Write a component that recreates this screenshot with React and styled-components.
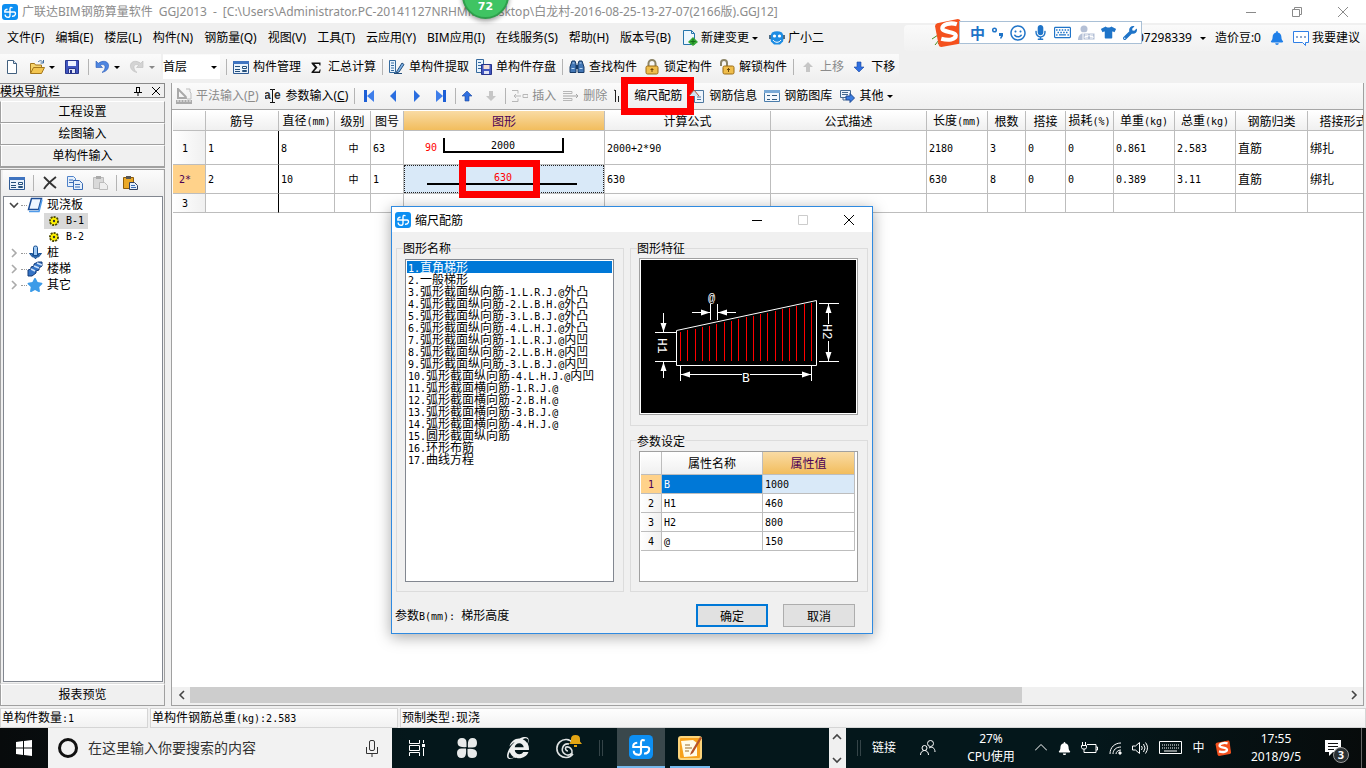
import React, {useState} from 'react';
import styled, {createGlobalStyle, css} from 'styled-components';
import {FaTshirt, FaWrench, FaMicrophone, FaRegKeyboard, FaRegSmile, FaInternetExplorer, FaBell, FaStar} from 'react-icons/fa';

const columns = [
    {key: 'name', label: '筋号', width: 73},
    {key: 'diameter', label: '直径(mm)', width: 56},
    {key: 'grade', label: '级别', width: 36, center: true},
    {key: 'shapeNo', label: '图号', width: 33},
    {key: 'shape', label: '图形', width: 201, active: true},
    {key: 'formula', label: '计算公式', width: 166},
    {key: 'note', label: '公式描述', width: 156},
    {key: 'length', label: '长度(mm)', width: 61},
    {key: 'count', label: '根数', width: 38},
    {key: 'lap', label: '搭接', width: 40},
    {key: 'loss', label: '损耗(%)', width: 48},
    {key: 'unit', label: '单重(kg)', width: 61},
    {key: 'total', label: '总重(kg)', width: 61},
    {key: 'kind', label: '钢筋归类', width: 72},
    {key: 'lapType', label: '搭接形式', width: 72},
];

const bars = [
    {id: '1', height: 34, name: '1', diameter: '8', grade: '中', shapeNo: '63', shape: 'hook', formula: '2000+2*90', length: '2180', count: '3', lap: '0', loss: '0', unit: '0.861', total: '2.583', kind: '直筋', lapType: '绑扎'},
    {id: '2*', height: 29, active: true, name: '2', diameter: '10', grade: '中', shapeNo: '1', shape: 'line', formula: '630', length: '630', count: '8', lap: '0', loss: '0', unit: '0.389', total: '3.11', kind: '直筋', lapType: '绑扎'},
    {id: '3', height: 19},
];

const shapes = [
    '1.直角梯形', '2.一般梯形',
    '3.弧形截面纵向筋-1.L.R.J.@外凸', '4.弧形截面纵向筋-2.L.B.H.@外凸',
    '5.弧形截面纵向筋-3.L.B.J.@外凸', '6.弧形截面纵向筋-4.L.H.J.@外凸',
    '7.弧形截面纵向筋-1.L.R.J.@内凹', '8.弧形截面纵向筋-2.L.B.H.@内凹',
    '9.弧形截面纵向筋-3.L.B.J.@内凹', '10.弧形截面纵向筋-4.L.H.J.@内凹',
    '11.弧形截面横向筋-1.R.J.@', '12.弧形截面横向筋-2.B.H.@',
    '13.弧形截面横向筋-3.B.J.@', '14.弧形截面横向筋-4.H.J.@',
    '15.圆形截面纵向筋', '16.环形布筋', '17.曲线方程',
];

const params = [['B', '1000'], ['H1', '460'], ['H2', '800'], ['@', '150']];

const menus = ['文件(F)', '编辑(E)', '楼层(L)', '构件(N)', '钢筋量(Q)', '视图(V)', '工具(T)', '云应用(Y)', 'BIM应用(I)', '在线服务(S)', '帮助(H)', '版本号(B)'];

const Global = createGlobalStyle`
* { box-sizing: border-box; }
body {
    margin: 0;
    background: #f0f0f0;
    color: #000;
    font: 12px/16px "Noto Sans", "Noto Sans CJK SC", sans-serif;
    overflow: hidden;
}
button, input, select {
    font: inherit;
    color: inherit;
    margin: 0;
    padding: 0;
    border: 0;
    background: none;
    border-radius: 0;
}
ul { list-style: none; margin: 0; padding: 0; }
svg { display: block; flex: none; }
`;

// Half-width characters take half of a 12px ideograph
const Narrow = styled.span`
font-family: "DejaVu Sans Mono", monospace;
font-size: 10px;
`;

const Grid = ({children}) => String(children).split(/([\x20-\x7e]+)/).filter(Boolean).map((part, i) => (
    /^[\x20-\x7e]/.test(part) ? <Narrow key={i}>{part}</Narrow> : part
));

const icons = {
    logo: <><rect width="16" height="16" rx="3" fill="#0d8ff2"/><path d="M10.500 3.800Q8.200 2.500 8 5v6q0 2.500-1.800 2.200Q3 13 3.200 10.500M5.500 5.200Q2.500 5.500 2.800 8H12q2 .2 1.300 2.500-.8 2-3.300 1.800" stroke="#fff" strokeWidth="1.400" fill="none"/></>,
    doc: <><path d="M3.500 1.500h6l3 3v10h-9z" fill="#fff" stroke="#42607f"/><path d="M9.500 1.500v3h3" fill="#d5e4f4" stroke="#42607f"/></>,
    folder: <><path d="M1.500 14V4.500h4l1 1.500h6v3" fill="#f6d36b" stroke="#a5771b"/><path d="M1.500 14.500l3-6h11l-3 6z" fill="#f3c54f" stroke="#a5771b"/><path d="M9 3c2-2 4-1.500 5 .5M14.500 1v3h-3" fill="none" stroke="#3f6c9e"/></>,
    save: <><path d="M1.500 1.500h13v13h-13z" fill="#4156c0" stroke="#27348b"/><path d="M4 2h8v5H4z" fill="#eef2ff"/><path d="M4.500 9.500h7v5h-7z" fill="#dfe3f5" stroke="#27348b"/><path d="M6 11h2v3H6z" fill="#27348b"/></>,
    undo: <path d="M2 2v6.500h6.500L6.300 6.300C9.500 4.500 11.500 6.500 11 9c-.4 1.800-1.500 3.300-3 4.500 4.500-1 7-4 6.500-7.500C14 2 8.500 1 4.300 4.300z" fill="#4f86e0" stroke="#2a5bb8" strokeWidth=".6"/>,
    redo: <path d="M14 2v6.500H7.500l2.200-2.200C6.500 4.500 4.500 6.500 5 9c.4 1.800 1.500 3.300 3 4.500-4.500-1-7-4-6.500-7.500C2 2 7.500 1 11.700 4.300z" fill="#d4d4d4" stroke="#bdbdbd" strokeWidth=".6"/>,
    form: <><path d="M.5 2.500h15v12H.500z" fill="#eaf3fc" stroke="#2f5a93"/><path d="M0 2h16v3H0z" fill="#3f74c0"/><path d="M2 7.500h5M2 10.500h5M2 12.500h5" stroke="#24507c" fill="none"/><path d="M9.500 7.500h4v2h-4zM9.500 11.500h4v1h-4z" stroke="#24507c" fill="#fff"/></>,
    sum: <path d="M3.500 3.500h9v3h-1L11 5H6.500l3 3.500-3.500 4h5l.7-2h1L12 14H3.500v-1L7 8.800 3.500 4.500z" fill="#111"/>,
    extract: <><path d="M.5 1.500h6v12h-6z" fill="#e7f2fd" stroke="#356a9e"/><path d="M2 4h3M2 6.500h3M2 9h3M2 11.500h3" stroke="#356a9e"/><path d="M8 12L13 4l2 1.500L10 13l-3 1z" fill="#7fb2e8" stroke="#234d7a"/><path d="M5 14.500h8" stroke="#234d7a"/></>,
    store: <><path d="M.5.5h7v13h-7z" fill="#e7f2fd" stroke="#356a9e"/><path d="M2 3.500h3M2 6.500h3M2 9.500h3" stroke="#356a9e"/><path d="M5.500 5.500h10v10h-10z" fill="#4156c0" stroke="#27348b"/><path d="M7.500 6h6v4h-6z" fill="#f4dfd8"/><path d="M8 12h5v3H8z" fill="#dfe3f5"/></>,
    find: <><path d="M3 2h3l1 3v8.500H1V8zM10 2h3l2 6v5.500H9V5z" fill="#4276b5" stroke="#173a66"/><path d="M7 6h2v4H7z" fill="#173a66"/><path d="M2.500 9.500h3M10.500 9.500h3M3.500 4h2M10.500 4h2" stroke="#bcd8f4"/></>,
    lock: <><path d="M4.500 8V4.500a3.500 3.500 0 0 1 7 0V8" fill="none" stroke="#8c8466" strokeWidth="2"/><rect x="2" y="7" width="12" height="8" rx="1.500" fill="#efbd4b" stroke="#9c6c14"/><path d="M8 9v4M6.500 10.500h3" stroke="#6c4708"/></>,
    unlock: <><path d="M2 7V4a3 3 0 0 1 6 0v3" fill="none" stroke="#8c8466" strokeWidth="2"/><rect x="4" y="7" width="11" height="8" rx="1.500" fill="#efbd4b" stroke="#9c6c14"/><path d="M9.500 9v4M8 10.500h3" stroke="#6c4708"/></>,
    up: <path d="M8 3l5 5h-3v5H6V8H3z" fill="#2f6fe0" stroke="#1b489f" strokeWidth=".6"/>,
    upOff: <path d="M8 3l5 5h-3v5H6V8H3z" fill="#c6c6c6"/>,
    down: <path d="M8 13l5-5h-3V3H6v5H3z" fill="#2f6fe0" stroke="#1b489f" strokeWidth=".6"/>,
    downOff: <path d="M8 13l5-5h-3V3H6v5H3z" fill="#c6c6c6"/>,
    first: <><path d="M3 2h3v12H3z" fill="#1d5fd6"/><path d="M13 2v12L6 8z" fill="#3f7eea"/></>,
    prev: <path d="M11 2v12L5 8z" fill="#2b6ee0"/>,
    next: <path d="M5 2v12l6-6z" fill="#2b6ee0"/>,
    last: <><path d="M10 2h3v12h-3z" fill="#1d5fd6"/><path d="M3 2v12l7-6z" fill="#3f7eea"/></>,
    ruler: <><path d="M2 1v9h9z" fill="none" stroke="#a9a9a9" strokeWidth="2"/><path d="M10 1h4v3l1 1v6h-4" fill="#f4f4f4" stroke="#bdbdbd"/><path d="M0 12h16v4H0z" fill="#aaa"/><path d="M2 12v2M5 12v2M8 12v2M11 12v2M14 12v2" stroke="#eee"/></>,
    insert: <><path d="M0 2.500h6v3M0 13.500h6v-3" fill="none" stroke="#b7b7b7"/><path d="M2 8h7M4 6L2 8l2 2M11 6.500h5v3h-5z" fill="none" stroke="#b7b7b7"/></>,
    remove: <><path d="M0 3.500h9v2H0M0 12.500h9v-2H0" fill="none" stroke="#b7b7b7"/><path d="M0 8h15M13 6l2 2-2 2" fill="none" stroke="#a5a5a5"/></>,
    scale: <path d="M1.500 2v12M4.500 8v6M7.500 6v8M10.500 4v10M0 2l2 1" stroke="#222" fill="none"/>,
    info: <><path d="M5.500 2.500h9v12h-9z" fill="#edf4fc" stroke="#4d779e"/><path d="M0 8l5-6 5 6" fill="#cfe1f3" stroke="#b44c37"/><path d="M8 9h4M8 11.500h4" stroke="#4d779e"/></>,
    library: <><path d="M.5 2.500h15v11H.500z" fill="#f3f8fd" stroke="#4b7dab"/><path d="M0 2h16v3H0z" fill="#79a9d6"/><path d="M3 7.500h3M3 11.500h3M8 7.500h5M8 11.500h5" stroke="#30597f"/></>,
    other: <><path d="M1.500 2.500h10v7h-10z" fill="#edf4fc" stroke="#44698f"/><path d="M3 4.500h6M3 6.500h6M4 9v3h3" stroke="#44698f" fill="none"/><path d="M7 8h4V5.500l4.500 4.500-4.500 4.500V12H7z" fill="#3c7de0" stroke="#1e4b94"/></>,
    change: <><path d="M1.500.5h8l3 3v11h-11z" fill="#eef7fd" stroke="#2675ab"/><path d="M9.500.5v3h3" fill="none" stroke="#2675ab"/><path d="M11 7l5 5-5 4-5-4z" fill="#35a834"/><path d="M11 9v5M8.500 11.500h5" stroke="#126b17"/></>,
    helper: <><path d="M3 2.500Q8 0 13 2.500l2 4-1 5-3 3H5l-3-3-1-5z" fill="#1d8ce3"/><circle cx="5.500" cy="6" r="1.600" fill="#fff"/><circle cx="10.500" cy="6" r="1.600" fill="#fff"/><path d="M4 10c2 3 6 3 8 0" stroke="#fff" fill="none"/><path d="M0 5h2v4H0zM14 5h2v4h-2z" fill="#4e6c86"/></>,
    chat: <><path d="M.5 1.500h15v11h-3v3l-3-3h-9z" fill="#fff" stroke="#2f7fe6"/><path d="M3 7h2M7 7h2M11 7h2" stroke="#1a4f9c"/></>,
    cross: <path d="M2 2c4 4 8 8 12 11M14 2C9 6 5 9 2 14" stroke="#333" strokeWidth="1.800" fill="none"/>,
    copy: <><path d="M.5 1.500h6l2 2v8h-8z" fill="#e6f0fb" stroke="#4f82c9"/><path d="M6.500 5.500h6l3 3v6h-9z" fill="#e6f0fb" stroke="#3a6cb5"/><path d="M2 5h4M2 7.500h4M8 9.500h5M8 12h5" stroke="#3a6cb5"/></>,
    pasteOff: <><path d="M1.500 2.500h10v11h-10z" fill="#d9d9d9" stroke="#bcbcbc"/><path d="M4 1h5v3H4z" fill="#aaa"/><path d="M7.500 7.500h5l3 3v4h-8z" fill="#eee" stroke="#bcbcbc"/></>,
    paste: <><path d="M1.500 2.500h10v11h-10z" fill="#eaa929" stroke="#8d5d0b"/><path d="M4 1h5v3H4z" fill="#555"/><path d="M7.500 7.500h5l3 3v4h-8z" fill="#e6f0fb" stroke="#33415f"/><path d="M9 10.500h4M9 12.500h5" stroke="#3a6cb5"/></>,
    slab: <><path d="M4.500 1.500h10l-3 11h-10z" fill="#eef6ff" stroke="#1c4d96" strokeWidth="1.500"/><path d="M2 14.500h10l3-12" fill="none" stroke="#4f9bea" strokeWidth="1.500"/></>,
    gear: <><circle cx="8" cy="8" r="4" fill="#fff200" stroke="#4d4a00" strokeDasharray="2 1" strokeWidth="2"/><circle cx="8" cy="8" r="3" fill="#fff200"/><circle cx="8" cy="8" r="1.200" fill="#333"/></>,
    pile: <><path d="M6.500 2.500a2 1.500 0 0 1 4 0V10l-2 4-2-4z" fill="#9dc8f3" stroke="#174f91"/><path d="M2.500 8.500h3v2h6v-2h3l-3 3.500h-6z" fill="#3c7fc9" stroke="#174f91"/></>,
    stairs: <><path d="M1 15V9l3-1V6l3-1V3l4-2h4v4l-3 2v2l-3 1v2l-4 3z" fill="#3473c5" stroke="#123a79"/><path d="M4 8l4 2M7 5l5 2M10 2l5 2" stroke="#cde2fb" strokeWidth="1.500"/></>,
    rebar: <path d="M3 15l4-5M6 14l5-6M0 9l9-6" stroke="#4a8a1d" fill="none"/>,
};

const Icon = ({name, size = 16}) => (
    <svg width={size} height={size} viewBox="0 0 16 16" aria-hidden="true">{icons[name]}</svg>
);

const TextIcon = () => (
    <svg width="16" height="16" viewBox="0 0 16 16" aria-hidden="true">
        <text x="-1" y="11" fontSize="12" fontFamily="Liberation Sans" fontWeight="bold" fill="#333">a</text>
        <text x="9" y="11" fontSize="12" fontFamily="Liberation Sans" fontWeight="bold" fill="#333">e</text>
        <path d="M5 1.500h2.500v13M10 1.500H7.500M5 14.500h5" stroke="#111" fill="none"/>
    </svg>
);

const Chevron = ({dir = 'down', color = '#444', size = 10}) => {
    const turn = {down: 0, left: 90, up: 180, right: 270}[dir];
    return (
        <svg width={size} height={size} viewBox="0 0 10 10" aria-hidden="true">
            <path d="M1 3l4 4 4-4" transform={`rotate(${turn} 5 5)`} fill="none" stroke={color} strokeWidth="1.600"/>
        </svg>
    );
};

const SogouS = ({size}) => (
    <svg width={size} height={size} viewBox="0 0 28 28" aria-hidden="true">
        <path d="M3 5L23 1q2 0 2.500 2L28 22q0 2-2 2.500L7 28q-2 0-2.500-2L1 8q0-2 2-3z" fill="#f4511e"/>
        <path d="M22 6c-6-2-14 0-14 4s13 3 13 7-7 5-14 3" fill="none" stroke="#fff" strokeWidth="4"/>
    </svg>
);

const BendShape = () => (
    <svg width="200" height="33" viewBox="0 0 200 33">
        <path d="M40 7v14h119V7" fill="none" stroke="#000" strokeWidth="2"/>
        <text x="21" y="20" fontSize="10" fontFamily="DejaVu Sans Mono" fill="#f00">90</text>
        <text x="99" y="18" fontSize="10" fontFamily="DejaVu Sans Mono" textAnchor="middle">2000</text>
    </svg>
);

const LineShape = () => (
    <svg width="198" height="26" viewBox="0 0 198 26">
        <path d="M22 18h150" stroke="#000" strokeWidth="2"/>
        <text x="98" y="15" fontSize="10" fontFamily="DejaVu Sans Mono" textAnchor="middle" fill="#f00">630</text>
    </svg>
);

const Diagram = () => {
    const lines = [];
    for(let i = 0; i < 19; i++){
        const x = Math.round(40 + i * 7.280) + .5;
        lines.push(<path key={i} d={`M${x} ${Math.round(73 - i * 1.620)}V102`} stroke="#f00"/>);
    }
    return (
        <svg width="100%" height="155" role="img" aria-label="直角梯形">
            {lines}
            <g fill="none" stroke="#fff">
                <path d="M36.500 71.500L176.500 41.500V106.500H36.500z"/>
                <path d="M40.500 107v15M171.500 107v15M41 115.500h61M110 115.500h61"/>
                <path d="M15 73.500h21M15 102.500h21M23.500 54v19M23.500 103v16"/>
                <path d="M179 44.500h20M179 102.500h20M188.500 45v20M188.500 82v20"/>
                <path d="M70.500 45v16M77.500 45v16M52 53.500h18M78 53.500h18"/>
            </g>
            <path d="M41 115.500l9-3v6zM171 115.500l-9-3v6zM23.500 73l-3-9h6zM23.500 103l-3 9h6zM188.500 45l-3 9h6zM188.500 102l-3-9h6zM70 53.500l-9-3v6zM78 53.500l9-3v6z" fill="#fff"/>
            <g fill="#fff" fontFamily="Liberation Mono" fontSize="13">
                <text x="102" y="123">B</text>
                <text x="68" y="43" fontSize="12">@</text>
                <text transform="translate(18 79) rotate(90)">H1</text>
                <text transform="translate(183 65) rotate(90)">H2</text>
            </g>
        </svg>
    );
};

const Page = styled.div`
position: relative;
display: flex;
flex-direction: column;
height: 100vh;
overflow: hidden;
`;

const TitleBar = styled.header`
display: flex;
align-items: center;
gap: 4px;
height: 23px;
padding: 0 17px 0 2px;
background: #fff;
color: #8c8c8c;
`;

const TitleText = styled.div`
display: flex;
flex: 1;
gap: 6px;
white-space: nowrap;
`;

const CaptionButtons = styled.div`
display: flex;
gap: ${props => props.gap}px;
color: ${props => props.color || '#8a8a8a'};
button {
    display: flex;
    padding: 0;
}
`;

const Ball = styled.div`
position: absolute;
z-index: 3;
left: 462px;
top: -28px;
width: 47px;
height: 47px;
padding-top: 25px;
border: 2px solid #2f9e4c;
border-radius: 50%;
background: #3fc463;
box-shadow: 0 2px 5px rgba(0,0,0,.4);
color: #fff;
font: bold 11px/16px "DejaVu Sans", sans-serif;
text-align: center;
`;

const MenuBar = styled.nav`
display: flex;
align-items: center;
justify-content: space-between;
height: 30px;
padding-left: 7px;
white-space: nowrap;
`;

const MenuGroup = styled.div`
display: flex;
align-items: center;
gap: 11px;
`;

const MenuButton = styled.button`
display: flex;
align-items: center;
gap: ${props => props.gap || 3}px;
white-space: nowrap;
`;

const Account = styled.div`
display: flex;
align-items: center;
justify-content: flex-end;
gap: 9px;
width: 462px;
height: 26px;
padding: 0 6px 0 28px;
border-radius: 4px 0 0 4px;
background: linear-gradient(#fafafa, #f1f1f1);
> svg:first-child { margin-right: auto; }
`;

const Arrow = styled.i`
width: 0;
border: 3px solid transparent;
border-top-color: ${props => props.off ? '#888' : '#000'};
border-bottom-width: 0;
`;

const Sogou = styled.div`
position: absolute;
z-index: 2;
left: 934px;
top: 18px;
display: flex;
align-items: center;
color: #1f74c8;
`;

const SogouKeys = styled.div`
display: flex;
align-items: center;
justify-content: space-between;
width: 183px;
height: 23px;
margin-left: -4px;
padding: 0 4px 0 10px;
border: 1px solid #a9c0d6;
background: #fff;
font-weight: bold;
font-size: 15px;
`;

const ToolRow = styled.div`
display: flex;
align-items: center;
gap: 2px;
height: 28px;
`;

const ToolGroup = styled.div`
display: flex;
align-items: center;
gap: 7px;
height: 26px;
padding-right: 4px;
background: linear-gradient(#fbfbfb, #efefef);
white-space: nowrap;
`;

const ToolButton = styled.button`
position: relative;
display: flex;
align-items: center;
gap: 4px;
color: ${props => props.off ? '#8b8b8b' : '#000'};
`;

const Sep = styled.i`
width: 1px;
height: 16px;
margin: 0 ${props => props.tight ? -4 : -1}px 0 -1px;
background: #b4b4b4;
`;

const FileTools = styled(ToolGroup)`
width: 161px;
gap: 9px;
padding-left: 4px;
`;

const FloorField = styled.label`
display: flex;
align-items: center;
height: 24px;
padding-right: 3px;
background: #fff;
`;

const FloorSelect = styled.select`
width: 48px;
height: 22px;
appearance: none;
background: #fff;
`;

const Workspace = styled.main`
display: flex;
gap: 6px;
flex: 1;
min-height: 0;
padding: 2px 2px 2px 0;
`;

const Sidebar = styled.aside`
display: flex;
flex-direction: column;
flex: none;
width: 165px;
`;

const PanelTitle = styled.div`
display: flex;
align-items: center;
justify-content: space-between;
height: 15px;
padding-right: 3px;
border: 1px solid #8a8a8a;
border-left: 0;
font-family: "Noto Sans CJK SC", sans-serif;
svg { margin-left: 8px; }
div { display: flex; }
`;

const ModuleButton = styled.button`
height: 22px;
border: 1px solid #a0a0a0;
border-top-color: #fff;
box-shadow: inset 1px 0 #fff;
`;

const Modules = styled.div`
display: flex;
flex-direction: column;
padding-top: 3px;
border-bottom: 1px solid #a0a0a0;
`;

const TreePanel = styled.section`
display: flex;
flex-direction: column;
flex: 1;
margin-top: 1px;
padding: 0 1px 1px 2px;
border: 1px solid #a0a0a0;
border-bottom-color: #dcdcdc;
`;

const TreeTools = styled.div`
display: flex;
align-items: center;
gap: 9px;
height: 26px;
padding-left: 6px;
background: linear-gradient(#fcfcfc, #ededed);
`;

const Tree = styled.ul`
flex: 1;
padding-left: 5px;
border: 1px solid #828790;
background: #fff;
`;

const TreeItem = styled.li`
display: flex;
align-items: center;
height: 16px;
padding-left: ${props => props.child ? 35 : 0}px;
> span:last-child {
    display: flex;
    align-items: center;
    gap: 4px;
    height: 16px;
    padding: 0 4px 0 ${props => props.child ? 2 : 0}px;
    background: ${props => props.selected ? '#d9d9d9' : 'none'};
}
`;

const Branch = styled.span`
width: 6px;
margin-left: 2px;
border-top: 1px dotted #999;
`;

const Editor = styled.section`
display: flex;
flex-direction: column;
flex: 1;
min-width: 0;
border: 1px solid #a0a0a0;
border-top: 0;
`;

const EditorTools = styled(ToolGroup)`
height: 27px;
flex: none;
padding-left: 4px;
border-bottom: 1px solid #a6a6a6;
`;

const NavButtons = styled.div`
display: flex;
gap: 8px;
`;

const RedMark = styled.span`
position: absolute;
inset: -11px -12px -11px 7px;
border: 7px solid #f00;
`;

const Sheet = styled.div`
flex: 1;
min-height: 0;
overflow: hidden;
padding: 1px 0 0 1px;
background: #fff;
`;

const cellFont = css`
font-family: "Noto Sans CJK SC", sans-serif;
font-size: 12px;
line-height: 16px;
`;

const Table = styled.table`
${cellFont}
width: 100%;
table-layout: fixed;
border-collapse: separate;
border-spacing: 0;
`;

const Th = styled.th`
height: 20px;
padding: 0;
border-right: 1px solid #bdbdbd;
border-bottom: 1px solid #bdbdbd;
background: ${props => props.active ? 'linear-gradient(#f9dba4, #f2bd5d)' : 'linear-gradient(#fff, #f0f0f0)'};
color: ${props => props.active ? '#4b0055' : '#000'};
font-weight: normal;
white-space: nowrap;
overflow: hidden;
`;

const RowHead = styled.th`
padding: 0 8px 0 0;
border-right: 1px solid #bdbdbd;
border-bottom: 1px solid #bdbdbd;
background: ${props => props.active ? '#ffd28a' : 'linear-gradient(90deg, #fff, #f0f0f0)'};
color: ${props => props.active ? '#4b0055' : '#000'};
font-weight: normal;
`;

const Td = styled.td`
position: relative;
padding: 0 0 0 ${props => props.flush ? 0 : 2}px;
border-right: 1px solid ${props => props.dark ? '#000' : '#bdbdbd'};
border-bottom: 1px solid #bdbdbd;
font-size: ${props => props.center ? 10 : 12}px;
text-align: ${props => props.center ? 'center' : 'left'};
white-space: nowrap;
`;

const FocusCell = styled.div`
height: 28px;
border: 1px dotted #222;
background: #d9e9f8;
`;

const CellMark = styled.span`
position: absolute;
left: 55px;
top: -5px;
width: 81px;
height: 38px;
border: 7px solid #f00;
`;

const Scroll = styled.div`
display: flex;
align-items: center;
flex: none;
height: 16px;
margin: 0 1px 2px;
background: #f0f0f0;
button { display: flex; justify-content: center; width: 17px; }
`;

const ScrollTrack = styled.div`
flex: 1;
height: 16px;
&::before {
    content: "";
    display: block;
    width: 72%;
    height: 100%;
    background: #cdcdcd;
}
`;

const StatusBar = styled.footer`
display: flex;
gap: 2px;
height: 20px;
font-family: "Noto Sans CJK SC", sans-serif;
`;

const StatusCell = styled.div`
flex: ${props => props.width ? `0 0 ${props.width}px` : 1};
padding-left: 1px;
border: 1px solid #d5d5d5;
background: linear-gradient(#fefefe, #f2f2f2);
`;

const Dialog = styled.section`
position: absolute;
z-index: 4;
left: 391px;
top: 206px;
width: 482px;
border: 1px solid #2f8ae0;
background: #f0f0f0;
box-shadow: 0 3px 14px rgba(0,0,0,.35);
${cellFont}
`;

const DialogTitle = styled.div`
display: flex;
align-items: center;
justify-content: space-between;
height: 25px;
padding: 0 17px 0 3px;
background: #fff;
h2 {
    display: flex;
    align-items: center;
    gap: 4px;
    margin: 0;
    font-size: 12px;
    font-weight: normal;
}
`;

const DialogBody = styled.div`
display: grid;
grid-template-columns: 228px 1fr;
gap: 7px 6px;
padding: 8px 4px 0;
`;

const Group = styled.fieldset`
min-width: 0;
margin: 0;
padding: ${props => props.top}px 9px 9px 8px;
border: 1px solid #dcdcdc;
grid-row: ${props => props.tall ? 'span 2' : 'auto'};
legend {
    height: 16px;
    margin-left: -2px;
    padding: 0;
}
`;

const ListBox = styled.ul`
height: 323px;
padding: 1px;
border: 1px solid #828790;
background: #fff;
`;

const Option = styled.li`
height: 12px;
padding-left: 1px;
line-height: 12px;
white-space: nowrap;
background: ${props => props.selected ? '#0078d7' : 'none'};
color: ${props => props.selected ? '#fff' : '#000'};
`;

const Preview = styled.div`
border: 1px solid #a0a0a0;
outline: 1px solid #fff;
outline-offset: -2px;
background: #000;
`;

const ParamBox = styled.div`
height: 131px;
padding: 0 2px 0 1px;
border: 1px solid #a0a0a0;
background: #fff;
`;

const ParamTable = styled(Table)`
${Th} { height: 23px; }
${RowHead} { padding: 0; }
${Td} { height: 19px; }
`;

const ParamName = styled(Td)`
background: ${props => props.active ? '#0078d7' : '#fff'};
color: ${props => props.active ? '#fff' : '#000'};
`;

const ParamValue = styled(Td)`
background: ${props => props.active ? '#d9e9f8' : '#fff'};
`;

const DialogFooter = styled.div`
display: flex;
align-items: center;
gap: 15px;
padding: 12px 17px 6px 3px;
p { flex: 1; margin: 0; }
`;

const PushButton = styled.button`
width: 72px;
height: 23px;
border: ${props => props.main ? '2px solid #0078d7' : '1px solid #adadad'};
background: #e1e1e1;
`;

const TaskBar = styled.footer`
display: flex;
align-items: center;
flex: none;
height: 40px;
background: linear-gradient(90deg, #080b0c, #04171b 30%, #04171b 80%, #070b0b);
color: #fff;
`;

const TaskButton = styled.button`
position: relative;
display: flex;
align-items: center;
justify-content: center;
flex: none;
width: ${props => props.width || 51}px;
height: 40px;
border-bottom: ${props => props.open ? '2px solid #76b9ed' : '0'};
background: ${props => props.current ? '#3a484c' : 'none'};
`;

const Search = styled.label`
display: flex;
align-items: center;
width: 344px;
height: 40px;
padding: 0 13px 0 10px;
background: #f2f2f2;
color: #333;
input {
    flex: 1;
    min-width: 0;
    margin-left: 10px;
    font-size: 14px;
    outline: 0;
}
input::placeholder { color: #333; opacity: 1; }
`;

const Grip = styled.i`
width: 4px;
height: 16px;
margin: 0 ${props => props.after}px 0 ${props => props.before}px;
border: 1px solid #354448;
border-width: 0 1px;
`;

const TaskScroll = styled.div`
display: flex;
flex-direction: column;
align-items: center;
justify-content: space-between;
width: 17px;
height: 40px;
margin-left: auto;
padding: 4px 0 3px;
background: #f0f0f0;
button { display: flex; }
`;

const Tray = styled.div`
display: flex;
align-items: center;
justify-content: space-between;
width: 196px;
margin: 0 16px 0 13px;
`;

const Readout = styled.div`
width: ${props => props.width}px;
text-align: center;
line-height: 18px;
`;

const Badge = styled.span`
position: absolute;
left: 28px;
top: 19px;
width: 16px;
height: 16px;
border: 1px solid #999;
border-radius: 50%;
background: #2b3133;
font: bold 11px/14px "Noto Sans", sans-serif;
`;

const ShowDesktop = styled.button`
align-self: stretch;
width: 5px;
border-left: 1px solid #666;
`;

const ShapeCell = ({kind}) => {
    if(kind === 'hook') return <BendShape />;
    if(kind === 'line') return <><FocusCell><LineShape /></FocusCell><CellMark /></>;
    return null;
};

const BarTable = () => (
    <Table>
        <colgroup>
            <col style={{width: 33}} />
            {columns.map(c => <col key={c.key} style={{width: c.width}} />)}
        </colgroup>
        <thead>
            <tr>
                <Th />
                {columns.map(c => <Th key={c.key} active={c.active ? 1 : undefined}><Grid>{c.label}</Grid></Th>)}
            </tr>
        </thead>
        <tbody>
            {bars.map(row => (
                <tr key={row.id} style={{height: row.height}}>
                    <RowHead scope="row" active={row.active ? 1 : undefined}><Grid>{row.id}</Grid></RowHead>
                    {columns.map(c => (
                        <Td key={c.key} dark={c.key === 'name' ? 1 : undefined} center={c.center ? 1 : undefined} flush={c.key === 'shape' ? 1 : undefined}>
                            {c.key === 'shape' ? <ShapeCell kind={row.shape} /> : <Grid>{row[c.key] || ''}</Grid>}
                        </Td>
                    ))}
                </tr>
            ))}
        </tbody>
    </Table>
);

const ScaleDialog = () => {
    const [selected, setSelected] = useState(0);

    return (
        <Dialog role="dialog" aria-label="缩尺配筋">
            <DialogTitle>
                <h2><Icon name="logo" />缩尺配筋</h2>
                <CaptionButtons gap={34} color="#000">
                    <button aria-label="最小化"><svg width="12" height="12"><path d="M1 6.500h10" stroke="currentColor"/></svg></button>
                    <button aria-label="最大化" disabled><svg width="12" height="12"><path d="M1.500 1.500h9v9h-9z" fill="none" stroke="#ccc"/></svg></button>
                    <button aria-label="关闭"><svg width="12" height="12"><path d="M1 1l10 10M11 1L1 11" stroke="currentColor"/></svg></button>
                </CaptionButtons>
            </DialogTitle>
            <DialogBody>
                <Group top={3} tall={1}>
                    <legend>图形名称</legend>
                    <ListBox role="listbox" aria-label="图形名称">
                        {shapes.map((s, i) => (
                            <Option key={s} role="option" aria-selected={i === selected} selected={i === selected} onClick={() => setSelected(i)}>
                                <Grid>{s}</Grid>
                            </Option>
                        ))}
                    </ListBox>
                </Group>
                <Group top={2}>
                    <legend>图形特征</legend>
                    <Preview><Diagram /></Preview>
                </Group>
                <Group top={2}>
                    <legend>参数设定</legend>
                    <ParamBox>
                        <ParamTable>
                            <colgroup><col style={{width: 21}} /><col style={{width: 101}} /><col /></colgroup>
                            <thead>
                                <tr><Th /><Th>属性名称</Th><Th active={1}>属性值</Th></tr>
                            </thead>
                            <tbody>
                                {params.map(([name, value], i) => (
                                    <tr key={name}>
                                        <RowHead scope="row" active={i === 0 ? 1 : undefined}><Grid>{i + 1}</Grid></RowHead>
                                        <ParamName active={i === 0 ? 1 : undefined}><Grid>{name}</Grid></ParamName>
                                        <ParamValue active={i === 0 ? 1 : undefined}><Grid>{value}</Grid></ParamValue>
                                    </tr>
                                ))}
                            </tbody>
                        </ParamTable>
                    </ParamBox>
                </Group>
            </DialogBody>
            <DialogFooter>
                <p><Grid>参数B(mm): 梯形高度</Grid></p>
                <PushButton main={1}>确定</PushButton>
                <PushButton>取消</PushButton>
            </DialogFooter>
        </Dialog>
    );
};

const Tool = ({icon, off, children}) => (
    <ToolButton off={off ? 1 : undefined} disabled={off}><Icon name={icon} />{children}</ToolButton>
);

const IconTool = ({icon, label}) => (
    <ToolButton aria-label={label}><Icon name={icon} /></ToolButton>
);

const App = () => (
    <Page>
        <Global />
        <TitleBar>
            <Icon name="logo" />
            <TitleText>
                <span>广联达BIM钢筋算量软件</span>
                <span>GGJ2013</span>
                <span>-</span>
                <span>[C:\Users\Administrator.PC-20141127NRHMM\Desktop\白龙村-2016-08-25-13-27-07(2166版).GGJ12]</span>
            </TitleText>
            <CaptionButtons gap={34}>
                <button aria-label="最小化"><svg width="12" height="12"><path d="M1 6.500h10" stroke="currentColor"/></svg></button>
                <button aria-label="还原"><svg width="12" height="12"><path d="M1.500 3.500h7v7h-7zM3.500 3V1.500h7v7H9" fill="none" stroke="currentColor"/></svg></button>
                <button aria-label="关闭"><svg width="12" height="12"><path d="M1 1l10 10M11 1L1 11" stroke="currentColor"/></svg></button>
            </CaptionButtons>
        </TitleBar>
        <Ball>72</Ball>
        <MenuBar>
            <MenuGroup>
                {menus.map(m => <MenuButton key={m}>{m}</MenuButton>)}
                <MenuButton><Icon name="change" />新建变更<Arrow /></MenuButton>
                <MenuButton><Icon name="helper" />广小二</MenuButton>
            </MenuGroup>
            <Account>
                <Icon name="rebar" />
                <MenuButton gap={8}>07298339<Arrow /></MenuButton>
                <span>造价豆:0</span>
                <FaBell size={14} color="#1f7fe8" />
                <MenuButton><Icon name="chat" />我要建议</MenuButton>
            </Account>
        </MenuBar>
        <Sogou>
            <SogouS size={29} />
            <SogouKeys>
                <span>中</span>
                <svg width="12" height="14" viewBox="0 0 12 14"><circle cx="2.500" cy="4" r="1.800" fill="none" stroke="currentColor" strokeWidth="1.500"/><path d="M7 7h4v3l-2 3-1-1 1-2H7z" fill="currentColor"/></svg>
                <FaRegSmile size={16} />
                <FaMicrophone size={15} />
                <FaRegKeyboard size={17} />
                <svg width="17" height="16" viewBox="0 0 17 16" fill="#b4c0d6"><circle cx="6" cy="4" r="3.500"/><path d="M0 15c0-9 12-9 12-1v1z"/><path d="M5 8h12v7H5z" stroke="#fff"/><path d="M7 10h3v1.500H7V13h3M15 10h-3v1.500h3V13h-3" fill="none" stroke="#fff"/></svg>
                <FaTshirt size={15} />
                <FaWrench size={14} />
            </SogouKeys>
        </Sogou>
        <ToolRow>
            <FileTools>
                <IconTool icon="doc" label="新建" />
                <ToolButton aria-label="打开"><Icon name="folder" /><Arrow /></ToolButton>
                <IconTool icon="save" label="保存" />
                <Sep tight={1} />
                <ToolButton aria-label="撤销"><Icon name="undo" /><Arrow /></ToolButton>
                <ToolButton aria-label="恢复" disabled><Icon name="redo" /><Arrow off={1} /></ToolButton>
            </FileTools>
            <ToolGroup>
                <FloorField>
                    <FloorSelect aria-label="楼层"><option>首层</option></FloorSelect>
                    <Arrow />
                </FloorField>
                <Sep />
                <Tool icon="form">构件管理</Tool>
                <Tool icon="sum">汇总计算</Tool>
                <Sep />
                <Tool icon="extract">单构件提取</Tool>
                <Tool icon="store">单构件存盘</Tool>
                <Sep />
                <Tool icon="find">查找构件</Tool>
                <Tool icon="lock">锁定构件</Tool>
                <Tool icon="unlock">解锁构件</Tool>
                <Sep />
                <Tool icon="upOff" off>上移</Tool>
                <Tool icon="down">下移</Tool>
            </ToolGroup>
        </ToolRow>
        <Workspace>
            <Sidebar>
                <PanelTitle>
                    模块导航栏
                    <div>
                        <svg width="10" height="10"><path d="M3.500 1v5M6.500 1v5M3 1.500h4M1 6.500h8M5 7v3" stroke="#000" fill="none"/></svg>
                        <svg width="10" height="10"><path d="M1 1l8 8M9 1L1 9" stroke="#000"/></svg>
                    </div>
                </PanelTitle>
                <Modules>
                    <ModuleButton>工程设置</ModuleButton>
                    <ModuleButton>绘图输入</ModuleButton>
                    <ModuleButton>单构件输入</ModuleButton>
                </Modules>
                <TreePanel>
                    <TreeTools>
                        <IconTool icon="form" label="构件管理" />
                        <Sep />
                        <IconTool icon="cross" label="删除" />
                        <IconTool icon="copy" label="复制" />
                        <IconTool icon="pasteOff" label="粘贴" />
                        <Sep tight={1} />
                        <IconTool icon="paste" label="粘贴到" />
                    </TreeTools>
                    <Tree>
                        <TreeItem><Chevron /><Branch /><span><Icon name="slab" />现浇板</span></TreeItem>
                        <TreeItem child={1} selected={1}><span><Icon name="gear" /><Grid>B-1</Grid></span></TreeItem>
                        <TreeItem child={1}><span><Icon name="gear" /><Grid>B-2</Grid></span></TreeItem>
                        <TreeItem><Chevron dir="right" color="#aaa" /><Branch /><span><Icon name="pile" />桩</span></TreeItem>
                        <TreeItem><Chevron dir="right" color="#aaa" /><Branch /><span><Icon name="stairs" />楼梯</span></TreeItem>
                        <TreeItem><Chevron dir="right" color="#aaa" /><Branch /><span><FaStar size={16} color="#3c9be8" />其它</span></TreeItem>
                    </Tree>
                </TreePanel>
                <ModuleButton>报表预览</ModuleButton>
            </Sidebar>
            <Editor>
                <EditorTools>
                    <Tool icon="ruler" off><span>平法输入(<u>P</u>)</span></Tool>
                    <ToolButton><TextIcon /><span>参数输入(<u>C</u>)</span></ToolButton>
                    <Sep />
                    <NavButtons>
                        <IconTool icon="first" label="第一个" />
                        <IconTool icon="prev" label="上一个" />
                        <IconTool icon="next" label="下一个" />
                        <IconTool icon="last" label="最后一个" />
                    </NavButtons>
                    <Sep tight={1} />
                    <NavButtons>
                        <IconTool icon="up" label="上移" />
                        <IconTool icon="downOff" label="下移" />
                    </NavButtons>
                    <Sep />
                    <Tool icon="insert" off>插入</Tool>
                    <Tool icon="remove" off>删除</Tool>
                    <ToolButton><Icon name="scale" />缩尺配筋<RedMark /></ToolButton>
                    <Tool icon="info">钢筋信息</Tool>
                    <Tool icon="library">钢筋图库</Tool>
                    <Tool icon="other">其他<Arrow /></Tool>
                </EditorTools>
                <Sheet><BarTable /></Sheet>
                <Scroll>
                    <button aria-label="向左滚动"><Chevron dir="left" /></button>
                    <ScrollTrack />
                    <button aria-label="向右滚动"><Chevron dir="right" /></button>
                </Scroll>
            </Editor>
        </Workspace>
        <StatusBar>
            <StatusCell width={148}><Grid>单构件数量:1</Grid></StatusCell>
            <StatusCell width={248}><Grid>单构件钢筋总重(kg):2.583</Grid></StatusCell>
            <StatusCell><Grid>预制类型:现浇</Grid></StatusCell>
        </StatusBar>
        <ScaleDialog />
        <TaskBar>
            <TaskButton width={48} aria-label="开始">
                <svg width="16" height="16" fill="#fff"><path d="M0 2l7-1v6.500H0zM8 1l8-1v7.500H8zM0 8.500h7V15l-7-1zM8 8.500h8V16l-8-1z"/></svg>
            </TaskButton>
            <Search>
                <svg width="20" height="20"><circle cx="10" cy="10" r="8.500" fill="none" stroke="#111" strokeWidth="3"/></svg>
                <input placeholder="在这里输入你要搜索的内容" aria-label="搜索" />
                <svg width="14" height="18" fill="none" stroke="#333"><rect x="4.500" y="1.500" width="5" height="10" rx="1.500"/><path d="M1.500 8v6.500h11V8M7 15v3"/></svg>
            </Search>
            <TaskButton width={49} aria-label="任务视图">
                <svg width="18" height="16" fill="none" stroke="#fff"><path d="M1.500 0v3.500h10V0M1.500 5.500h10v5h-10zM1.500 16v-3.500h10V16M15.500 0v3M15.500 8v8"/><path d="M14 4h3v3h-3z" fill="#fff" stroke="none"/></svg>
            </TaskButton>
            <TaskButton aria-label="浏览器">
                <svg width="22" height="22" viewBox="0 0 22 22" fill="#e8eaea"><path d="M10.500 10V5.500Q10.500 1 6 1 1.500 1 1.500 5.500q0 4 4.500 4.500 3 .3 4.500 0zM12 10.500h4.500q4.500 0 4.500-4.500 0-5-4.500-5-4 0-4.500 4.500-.3 3 0 5zM11.500 12v4.500q0 4.500 4.500 4.500 5 0 5-4.500 0-4-4.500-4.500-3-.3-5 0zM10 11.500H5.500Q1 11.500 1 16q0 5 4.500 5 4 0 4.500-4.500.3-3 0-5z"/></svg>
            </TaskButton>
            <TaskButton aria-label="Internet Explorer"><FaInternetExplorer size={22} color="#eef0f0" /></TaskButton>
            <TaskButton aria-label="提醒">
                <svg width="28" height="28" viewBox="0 0 28 28"><path d="M18 20a9 9 0 1 1 0-11M14 10a5.500 5.500 0 1 0 3 9 5 5 0 0 0-6-6 2.500 2.500 0 0 0 2 4" fill="none" stroke="#dfe3e3" strokeWidth="1.600"/><path d="M14 10h13l-2-2.500V5q0-4-4.500-4T16 5v2.500zM19 11h3v2h-3z" fill="#e2a413"/></svg>
            </TaskButton>
            <Grip before={5} after={14} />
            <TaskButton width={48} open={1} current={1} aria-label="广联达"><Icon name="logo" size={24} /></TaskButton>
            <TaskButton width={50} aria-label="笔记">
                <svg width="40" height="40" viewBox="0 0 40 40"><rect x="9" y="9" width="22" height="22" rx="2" fill="#f7a11b" stroke="#fbd37a" strokeWidth="2"/><path d="M11 13l12-1 4 3v13l-13 1z" fill="#fffbe8"/><path d="M15 17h5M15 20h7M15 23h4" stroke="#9b6a28"/><path d="M30 9L21 24l-1 3 3-2L32 10z" fill="#b5532a"/><path d="M0 39h40" stroke="#76b9ed" strokeWidth="2"/></svg>
            </TaskButton>
            <TaskScroll>
                <button aria-label="向上"><Chevron dir="up" /></button>
                <button aria-label="向下"><Chevron /></button>
            </TaskScroll>
            <Grip before={11} after={11} />
            <span>链接</span>
            <TaskButton width={64} aria-label="人脉">
                <svg width="16" height="18" fill="none" stroke="#fff"><circle cx="10.500" cy="4.500" r="3"/><circle cx="4.500" cy="9" r="2.500"/><path d="M.5 16c0-6 8-6 8 0M9 9c3-2 6 0 6 4"/></svg>
            </TaskButton>
            <Readout width={62}>27%<br />CPU使用</Readout>
            <Tray>
                <svg width="12" height="12" fill="none" stroke="#fff"><path d="M0 8.500l6-6 6 6"/></svg>
                <FaBell size={13} />
                <svg width="17" height="14" fill="none" stroke="#fff"><path d="M6 3.500h9v8H6M15 6h1.500v3H15M1.500 1v3M4.500 1v3M.5 4.500h5v2l-1 1.500h-3l-1-1.500zM3 8v3.500h3"/></svg>
                <svg width="13" height="14" fill="none" stroke="#fff"><path d="M1 13C1 6 6 2 12 2M4 13c0-4 3-7 8-7M7 13c0-2 2-4 5-4" /><circle cx="11" cy="12" r="1.200" fill="#fff"/></svg>
                <svg width="16" height="14" fill="none" stroke="#fff"><path d="M.5 5h3l4-3.500v11L3.500 9h-3zM9.500 5q1.500 2 0 4M11.500 3q3 4 0 8M13.500 1.500q4 5 0 11"/></svg>
                <svg width="23" height="14" fill="none" stroke="#fff"><path d="M.5.5h22v12H.500z"/><path d="M3 4h17M3 7h17" strokeDasharray="1 1"/><path d="M5 10h13"/></svg>
                <span>中</span>
                <SogouS size={16} />
            </Tray>
            <Readout width={58}>17:55<br />2018/9/5</Readout>
            <TaskButton width={56} aria-label="通知">
                <svg width="18" height="18"><path d="M1 1h16v12H9l-4 4v-4H1z" fill="#fff"/><path d="M4 4.500h10M4 7.500h10M4 10.500h6" stroke="#111"/></svg>
                <Badge>3</Badge>
            </TaskButton>
            <ShowDesktop aria-label="显示桌面" />
        </TaskBar>
    </Page>
);

export default App;
